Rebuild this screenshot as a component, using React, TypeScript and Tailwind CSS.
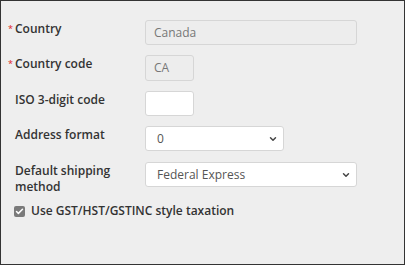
import { ChevronDown, Check } from "lucide-react";

function Label({ text, required, className = "" }: { text: React.ReactNode; required?: boolean; className?: string }) {
  return (
    <>
      <span className={`text-[9px] leading-[14px] text-[#e02020] pt-[2px] ${className}`}>{required ? "*" : ""}</span>
      <label className={`text-[12px] leading-[16px] font-semibold text-[#333] pt-px pr-2 ${className}`}>{text}</label>
    </>
  );
}

function Select({ value, width, className = "" }: { value: string; width: string; className?: string }) {
  return (
    <div
      className={`${width} ${className} h-[25px] flex items-center justify-between rounded-[3px] border border-[#d6d6d6] bg-white pl-[11px] pr-[5px] text-[12px] text-[#555]`}
    >
      <span>{value}</span>
      <ChevronDown size={10} strokeWidth={3.5} className="text-[#444]" />
    </div>
  );
}

export default function App() {
  return (
    <div
      className="w-[405px] h-[265px] border border-[#333] bg-[#eeeeee] pt-[19px] pl-[7px]"
      style={{ fontFamily: '"Open Sans", "Liberation Sans", sans-serif' }}
    >
      <div className="grid grid-cols-[7px_130px_1fr] gap-y-[10px] items-start">
        <Label text="Country" required />
        <div className="w-[212px] h-[25px] flex items-center rounded-[3px] border border-[#d6d6d6] bg-[#ededed] px-[8px] text-[12px] text-[#777]">
          Canada
        </div>

        <Label text="Country code" required />
        <div className="w-[49px] h-[26px] flex items-center rounded-[3px] border border-[#d6d6d6] bg-[#ededed] px-[8px] text-[12px] text-[#777]">
          CA
        </div>

        <Label text="ISO 3-digit code" />
        <div className="w-[49px] h-[25px] rounded-[3px] border border-[#d6d6d6] bg-white" />

        <Label text="Address format" />
        <Select value="0" width="w-[139px]" />

        <Label text={<>Default shipping<br />method</>} className="mt-px" />
        <Select value="Federal Express" width="w-[212px]" className="mt-px" />
      </div>

      <div className="flex items-center gap-[6px] mt-[8px] pl-[6px]">
        <span className="w-[11px] h-[11px] rounded-[2px] bg-[#7a7a7a] flex items-center justify-center">
          <Check size={9} strokeWidth={4} className="text-white" />
        </span>
        <span className="text-[12px] leading-[16px] font-semibold text-[#333]">Use GST/HST/GSTINC style taxation</span>
      </div>
    </div>
  );
}
